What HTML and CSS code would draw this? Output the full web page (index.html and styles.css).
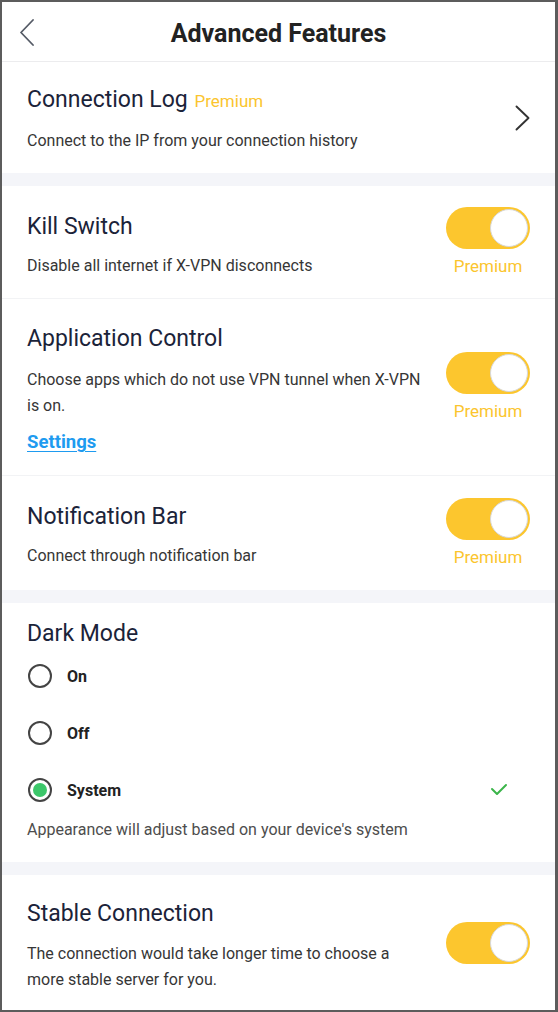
FILE: index.html
```html
<!DOCTYPE html>
<html>
<head>
<meta charset="utf-8">
<link rel="stylesheet" href="styles.css">
</head>
<body>
<div class="frame">
  <header class="header">
    <svg class="back" width="20" height="30" viewBox="0 0 20 30"><polyline points="13,2 1,14.5 13,27" fill="none" stroke="#555b66" stroke-width="1.8" stroke-linecap="round" stroke-linejoin="round"/></svg>
    <h1 class="title">Advanced Features</h1>
  </header>

  <section class="row conn">
    <div class="text">
      <div class="name">Connection Log <span class="prem-inline">Premium</span></div>
      <div class="desc">Connect to the IP from your connection history</div>
    </div>
    <svg class="chev" width="16" height="26" viewBox="0 0 16 26"><polyline points="1.5,1.5 13.5,13 1.5,24.5" fill="none" stroke="#333" stroke-width="1.9" stroke-linecap="round" stroke-linejoin="round"/></svg>
  </section>

  <div class="gap"></div>

  <section class="row kill line">
    <div class="text">
      <div class="name">Kill Switch</div>
      <div class="desc">Disable all internet if X-VPN disconnects</div>
    </div>
    <div class="side">
      <div class="toggle"><span class="knob"></span></div>
      <div class="prem">Premium</div>
    </div>
  </section>

  <section class="row app line">
    <div class="text">
      <div class="name">Application Control</div>
      <div class="desc">Choose apps which do not use VPN tunnel when X-VPN is on.</div>
      <a class="link">Settings</a>
    </div>
    <div class="side">
      <div class="toggle"><span class="knob"></span></div>
      <div class="prem">Premium</div>
    </div>
  </section>

  <section class="row notif">
    <div class="text">
      <div class="name">Notification Bar</div>
      <div class="desc">Connect through notification bar</div>
    </div>
    <div class="side">
      <div class="toggle"><span class="knob"></span></div>
      <div class="prem">Premium</div>
    </div>
  </section>

  <div class="gap"></div>

  <section class="dark">
    <div class="name">Dark Mode</div>
    <div class="radios">
      <div class="radio-row"><span class="radio"></span><span class="rlabel">On</span></div>
      <div class="radio-row"><span class="radio"></span><span class="rlabel">Off</span></div>
      <div class="radio-row"><span class="radio checked"></span><span class="rlabel">System</span>
        <svg class="check" width="18" height="14" viewBox="0 0 18 14"><polyline points="2,6 7,11 16,2" fill="none" stroke="#3bb54a" stroke-width="2" stroke-linecap="round" stroke-linejoin="round"/></svg>
      </div>
    </div>
    <div class="desc muted">Appearance will adjust based on your device's system</div>
  </section>

  <div class="gap"></div>

  <section class="row stable">
    <div class="text">
      <div class="name">Stable Connection</div>
      <div class="desc">The connection would take longer time to choose a more stable server for you.</div>
    </div>
    <div class="side">
      <div class="toggle"><span class="knob"></span></div>
    </div>
  </section>
</div>
</body>
</html>
```

FILE: styles.css
```css
* { box-sizing: border-box; margin: 0; padding: 0; }
html, body { background: #5c5c5c; }
body { font-family: Roboto, "Noto Sans", sans-serif; }

.frame {
  width: 558px;
  height: 1012px;
  border: 2px solid #5c5c5c;
  border-right-width: 3px;
  background: #fff;
  overflow: hidden;
}

.header {
  position: relative;
  height: 60px;
  border-bottom: 1px solid #ececee;
  display: flex;
  align-items: center;
  justify-content: center;
  padding-top: 4px;
}
.back { position: absolute; left: 18px; top: 16px; }
.title { font-size: 25px; font-weight: 700; color: #222; line-height: 30px; }

.row {
  display: flex;
  align-items: center;
  padding: 0 25px;
}
.text { flex: 1; min-width: 0; }
.side {
  width: 84px;
  margin-left: 19px;
  display: flex;
  flex-direction: column;
  align-items: center;
  gap: 6px;
}
.line { border-bottom: 1px solid #f2f3f5; }

.name { font-size: 23px; line-height: 28px; color: #1b2339; }
.desc { font-size: 16px; line-height: 26px; color: #363636; }
.muted { color: #4d4d4d; }
.prem-inline { font-size: 17px; color: #fbc52e; margin-left: 1px; }
.prem { font-size: 17px; line-height: 22px; color: #fbc52e; }

.gap { height: 13px; background: #f4f5f9; }

.conn .text { padding: 24px 0 19px; }
.conn .desc { margin-top: 13px; }
.chev { margin-right: -1px; }

.kill .text { padding: 27px 0 19px; }
.kill .desc { margin-top: 12px; }

.app .text { padding: 26px 0 20px; }
.app .desc { margin-top: 14px; }
.link {
  display: block;
  margin-top: 10px;
  font-size: 18.5px;
  line-height: 26px;
  font-weight: 700;
  color: #1e9bf0;
  text-decoration: underline;
  text-underline-offset: 3px;
}

.notif .text { padding: 27px 0 21px; }
.notif .desc { margin-top: 12px; }

.toggle {
  width: 84px;
  height: 42px;
  border-radius: 21px;
  background: #fcc62e;
  display: flex;
  justify-content: flex-end;
  align-items: center;
  padding-right: 2px;
}
.knob {
  width: 38px;
  height: 38px;
  border-radius: 50%;
  background: #fff;
  border: 1.5px solid #d8d8d8;
}

.dark { padding: 17px 25px 19px; }
.radios {
  margin-top: 9px;
  display: flex;
  flex-direction: column;
  gap: 19px;
}
.radio-row {
  height: 38px;
  display: flex;
  align-items: center;
  padding-left: 1px;
  padding-right: 22px;
}
.radio {
  width: 24px;
  height: 24px;
  border-radius: 50%;
  border: 2.3px solid #444;
  display: flex;
  align-items: center;
  justify-content: center;
}
.radio.checked::after {
  content: "";
  width: 14px;
  height: 14px;
  border-radius: 50%;
  background: #3cc76a;
}
.rlabel { margin-left: 15px; font-size: 16px; font-weight: 700; color: #222; flex: 1; }
.check { margin-top: -1px; }
.dark .desc { margin-top: 8px; }

.stable .text { padding: 25px 0 18px; }
.stable .desc { margin-top: 13px; }
```
